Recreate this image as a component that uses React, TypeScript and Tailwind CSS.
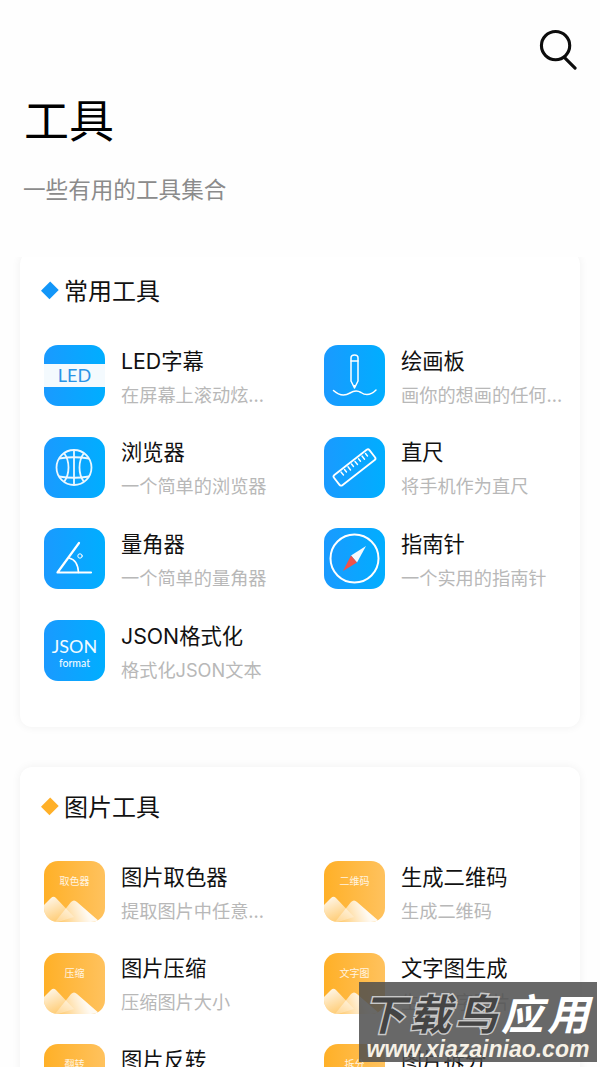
import { useId } from 'react';
import type { ReactNode } from 'react';

const FONT = "font-['Inter','Noto_Sans_CJK_SC',sans-serif]";

function BlueTile({ children }: { children: ReactNode }) {
  const id = useId();
  return (
    <svg width="61" height="61" viewBox="0 0 61 61" className="shrink-0">
      <defs>
        <linearGradient id={id} x1="0" y1="0" x2="1" y2="0">
          <stop offset="0" stopColor="#1a9aff" />
          <stop offset="1" stopColor="#00aeff" />
        </linearGradient>
      </defs>
      <rect width="61" height="61" rx="14" fill={`url(#${id})`} />
      {children}
    </svg>
  );
}

function ImageTile({ label }: { label: string }) {
  const id = useId();
  return (
    <div className="relative h-[61px] w-[61px] shrink-0">
      <svg width="61" height="61" viewBox="0 0 61 61" className="block">
        <defs>
          <linearGradient id={`${id}a`} x1="0" y1="0" x2="1" y2="0">
            <stop offset="0" stopColor="#ffb027" />
            <stop offset="1" stopColor="#ffc25e" />
          </linearGradient>
          <linearGradient id={`${id}b`} x1="0.2" y1="0" x2="0.8" y2="1">
            <stop offset="0" stopColor="#fff" stopOpacity="0.9" />
            <stop offset="1" stopColor="#fff" stopOpacity="0.2" />
          </linearGradient>
          <linearGradient id={`${id}d`} x1="0" y1="0.7" x2="0.7" y2="0.55">
            <stop offset="0" stopColor="#fff" stopOpacity="0.25" />
            <stop offset="1" stopColor="#fff" stopOpacity="0.92" />
          </linearGradient>
          <clipPath id={`${id}c`}>
            <rect width="61" height="61" rx="14" />
          </clipPath>
        </defs>
        <rect width="61" height="61" rx="14" fill={`url(#${id}a)`} />
        <g clipPath={`url(#${id}c)`}>
          <path d="M0 44 L7 37 Q9.5 34.5 12 37 L30 56 L14 61 H0 Z" fill={`url(#${id}b)`} />
          <path d="M11 61 L27 41 Q30 38 33 41 L56 61 Z" fill={`url(#${id}d)`} />
        </g>
      </svg>
      <span className="absolute inset-x-0 top-[13px] text-center text-[10px] leading-[14px] text-white/85">
        {label}
      </span>
    </div>
  );
}

const LedIcon = (
  <BlueTile>
    <rect y="19" width="61" height="23" fill="#f4fafe" />
    <text x="30.5" y="37" textAnchor="middle" fontSize="18" fill="#2a94e6" fontFamily="Lato, sans-serif">
      LED
    </text>
  </BlueTile>
);

const PenIcon = (
  <BlueTile>
    <g fill="none" stroke="#fff" strokeWidth="1.5" strokeLinejoin="round" strokeLinecap="round">
      <path d="M27 13 Q27 10 30.5 10 Q34 10 34 13 V36 L30.5 43 L27 36 Z" />
      <path d="M27 16 H34" />
      <path d="M9.5 45.5 C15 50.5 21 51 26 48 C30 45.5 33 45 37 47.5 C42 51 47 50 52 45" />
    </g>
    <path d="M29 40 L30.5 43 L32 40 Z" fill="#fff" />
  </BlueTile>
);

const BallIcon = (
  <BlueTile>
    <g fill="none" stroke="#fff" strokeWidth="1.8" opacity="0.92">
      <circle cx="30" cy="30.5" r="17.5" />
      <path d="M30 13 V48" />
      <path d="M15 21.5 Q30 19 45 21.5" />
      <path d="M15 39.5 Q30 42 45 39.5" />
      <path d="M20 16 C26 24 26 37 20 45" />
      <path d="M40 16 C34 24 34 37 40 45" />
    </g>
  </BlueTile>
);

const RulerIcon = (
  <BlueTile>
    <g fill="none" stroke="#fff" strokeWidth="1.8" strokeLinejoin="round" strokeLinecap="round">
      <rect x="8" y="24" width="45" height="13" rx="2" transform="rotate(-38 30.5 30.5)" />
      <path
        d="M17 35 L19.5 38 M20.5 32.5 L22.5 35 M24 29.8 L26.5 33 M27.5 27 L29.5 29.5 M31 24.5 L33.5 27.5 M34.5 21.8 L36.5 24.3 M38 19 L40.5 22.2 M41.5 16.5 L43.5 19"
        strokeWidth="1.4"
      />
    </g>
  </BlueTile>
);

const AngleIcon = (
  <BlueTile>
    <g fill="none" stroke="#fff" strokeLinecap="round" strokeLinejoin="round">
      <path d="M35 15 L13.5 44.5 H47" strokeWidth="2.2" />
      <path d="M25 30 C30 31 34 36 34.5 44.5" strokeWidth="1.6" />
      <circle cx="36" cy="28" r="2.2" strokeWidth="1" />
    </g>
  </BlueTile>
);

const CompassIcon = (
  <BlueTile>
    <circle cx="30.5" cy="30.5" r="24" fill="none" stroke="#fff" strokeWidth="2" />
    <path d="M42 18 L33 34.5 L27 27.5 Z" fill="#f4f9fd" />
    <path d="M19 43 L27 27.5 L33 34.5 Z" fill="#f0524a" />
  </BlueTile>
);

const JsonIcon = (
  <BlueTile>
    <text x="30.5" y="33" textAnchor="middle" fontSize="18" fill="#f2fbff" fontFamily="Lato, sans-serif">
      JSON
    </text>
    <text x="30.5" y="47" textAnchor="middle" fontSize="10.5" fontWeight="500" fill="#f2fbff" fontFamily="Lato, sans-serif">
      format
    </text>
  </BlueTile>
);

const commonTools = [
  { icon: LedIcon, title: 'LED字幕', sub: '在屏幕上滚动炫…' },
  { icon: PenIcon, title: '绘画板', sub: '画你的想画的任何…' },
  { icon: BallIcon, title: '浏览器', sub: '一个简单的浏览器' },
  { icon: RulerIcon, title: '直尺', sub: '将手机作为直尺' },
  { icon: AngleIcon, title: '量角器', sub: '一个简单的量角器' },
  { icon: CompassIcon, title: '指南针', sub: '一个实用的指南针' },
  { icon: JsonIcon, title: 'JSON格式化', sub: '格式化JSON文本' },
];

const imageTools = [
  { icon: <ImageTile label="取色器" />, title: '图片取色器', sub: '提取图片中任意…' },
  { icon: <ImageTile label="二维码" />, title: '生成二维码', sub: '生成二维码' },
  { icon: <ImageTile label="压缩" />, title: '图片压缩', sub: '压缩图片大小' },
  { icon: <ImageTile label="文字图" />, title: '文字图生成', sub: '生成文字图片' },
  { icon: <ImageTile label="翻转" />, title: '图片反转', sub: '翻转图片' },
  { icon: <ImageTile label="拆分" />, title: '图片拆分', sub: '拆分图片' },
];

function ToolItem({ icon, title, sub }: { icon: ReactNode; title: string; sub: string }) {
  return (
    <div className="flex h-[61px] items-center">
      {icon}
      <div className="ml-4 flex flex-col pt-[2px]">
        <div className="text-[21.3px] leading-[30px] text-[#111]">{title}</div>
        <div className="mt-[6px] text-[18.2px] leading-[26px] text-[#b8b8b8]">{sub}</div>
      </div>
    </div>
  );
}

function Section({
  title,
  diamond,
  tools,
  className,
}: {
  title: string;
  diamond: string;
  tools: { icon: ReactNode; title: string; sub: string }[];
  className: string;
}) {
  return (
    <section
      className={`mx-5 rounded-xl bg-white pb-[46px] pl-6 shadow-[0_0_10px_rgba(0,0,0,0.06)] ${className}`}
    >
      <div className="flex items-center pt-[23px]">
        <span className="flex h-[12px] w-[12px] -translate-y-[2px] items-center justify-center">
          <span className={`h-[12.5px] w-[12.5px] rotate-45 ${diamond}`} />
        </span>
        <h2 className="ml-2 text-2xl leading-[34px] text-[#111]">{title}</h2>
      </div>
      <div className="mt-[36px] grid grid-cols-[280px_256px] gap-y-[30.7px]">
        {tools.map((t) => (
          <ToolItem key={t.title} {...t} />
        ))}
      </div>
    </section>
  );
}

function Watermark() {
  return (
    <div className="absolute left-[359px] top-[982px] flex h-[80px] w-[238px] flex-col items-center overflow-hidden bg-[#4e4e4e]/85">
      <div className="mt-[8px] whitespace-nowrap text-[42px] font-bold italic leading-[50px] tracking-[4px]">
        <span className="text-[#444] [-webkit-text-stroke:3px_#c8c8c8] [paint-order:stroke_fill]">下载鸟</span>
        <span className="text-white">应用</span>
      </div>
      <div className="mt-[-3px] whitespace-nowrap font-['Liberation_Sans',sans-serif] text-[23px] font-bold italic leading-[24px] text-[#f6f1e6]">
        www.xiazainiao.com
      </div>
    </div>
  );
}

export default function App() {
  return (
    <div className={`relative h-[1067px] w-[600px] overflow-hidden bg-[#fefefe] ${FONT}`}>
      <header className="flex h-[257px] flex-col">
        <div className="flex justify-end pr-[22px] pt-[29px]">
          <svg width="39" height="41" viewBox="0 0 40 42" fill="none" stroke="#0c0c0c" strokeWidth="3.2" strokeLinecap="round">
            <circle cx="17" cy="17" r="14.5" />
            <path d="M27 30 L37 40" />
          </svg>
        </div>
        <h1 className="ml-6 mt-[20px] text-[45px] leading-[64px] text-black">工具</h1>
        <p className="ml-[23px] mt-[20px] text-[22.6px] leading-[32px] text-[#8b8b8b]">一些有用的工具集合</p>
      </header>
      <div className="h-[810px] overflow-hidden">
        <Section title="常用工具" diamond="bg-[#1296f8]" tools={commonTools} className="-mt-[5px]" />
        <Section title="图片工具" diamond="bg-[#ffb028]" tools={imageTools} className="mt-10 pt-[1px]" />
      </div>
      <Watermark />
    </div>
  );
}
